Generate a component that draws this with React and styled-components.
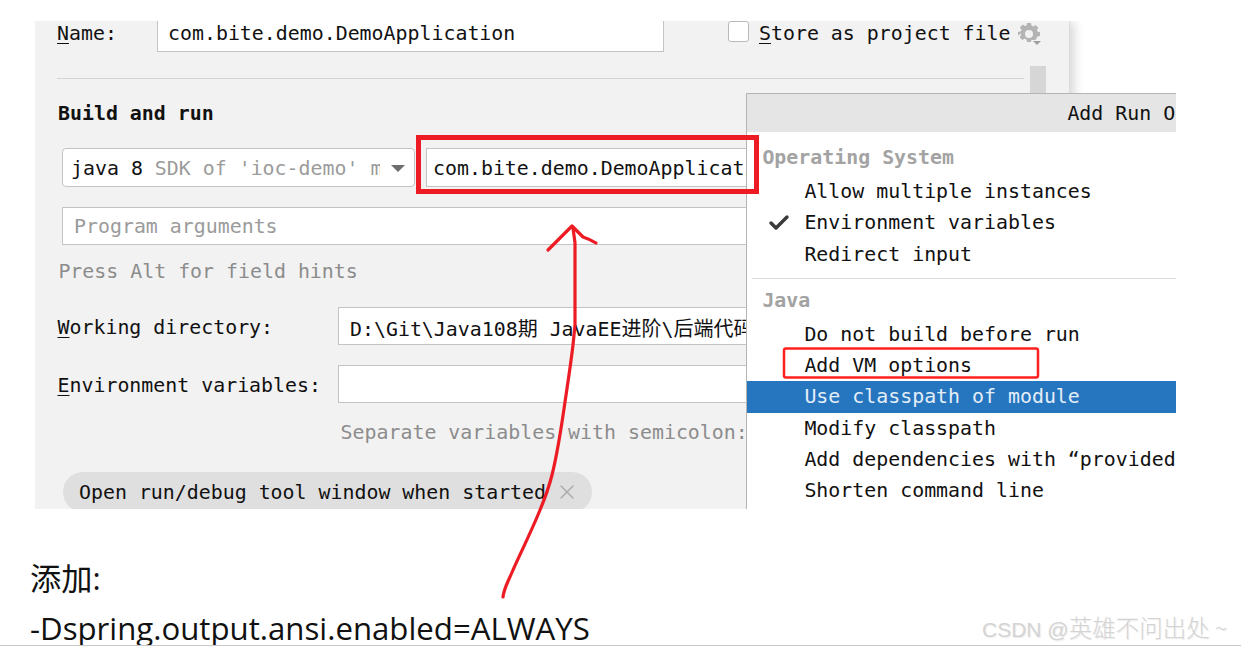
import React from "react";
import styled, { createGlobalStyle } from "styled-components";
import { Check, X } from "lucide-react";

const mono = `"DejaVu Sans Mono", "Noto Sans CJK SC", monospace`;

const Global = createGlobalStyle`
  html, body { margin: 0; padding: 0; background: #fff; }
  #root { width: 1241px; height: 646px; overflow: hidden; }
`;

const Page = styled.div`
  position: relative;
  width: 1241px;
  height: 646px;
  padding-top: 21px;
  box-sizing: border-box;
  background: #fff;
  overflow: hidden;
`;

const Shot = styled.div`
  position: relative;
  width: 1141px;
  height: 488px;
  margin-left: 35px;
  overflow: hidden;
`;

const Dialog = styled.div`
  width: 1035px;
  height: 488px;
  padding: 0 0 0 22px;
  box-sizing: border-box;
  background: #f2f2f2;
  border-right: 1px solid #dcdcdc;
  box-shadow: 4px 0 10px rgba(0, 0, 0, 0.16);
  font-family: ${mono};
  font-size: 19.9px;
  color: #111;
  white-space: nowrap;
`;

const NameRow = styled.div`
  display: flex;
  align-items: flex-start;
  height: 31px;
  line-height: 26px;
`;

const NameLabel = styled.span`
  width: 100px;
`;

const Field = styled.div`
  display: flex;
  align-items: center;
  box-sizing: border-box;
  background: #fff;
  border: 1px solid #c4c4c4;
  width: ${(p) => p.$w}px;
  height: ${(p) => p.$h || 38}px;
  padding-left: ${(p) => p.$pad || 11}px;
  overflow: hidden;
  flex: none;
`;

const NameField = styled(Field)`
  border-top: 0;
  align-items: flex-start;
`;

const StoreBox = styled.span`
  width: 21px;
  height: 21px;
  box-sizing: border-box;
  margin-left: 64px;
  margin-right: 10px;
  background: #fff;
  border: 1px solid #b9b9b9;
  border-radius: 3px;
  flex: none;
`;

const Gear = styled.svg`
  margin: 1px 0 0 7px;
  flex: none;
`;

const Rule = styled.div`
  height: 1px;
  width: 967px;
  margin-top: 26px;
  background: #d3d3d3;
`;

const Heading = styled.div`
  margin: 23px 0 0 1px;
  font-weight: 700;
  line-height: 24px;
`;

const BuildRow = styled.div`
  display: flex;
  margin: 22px 0 0 5px;
  gap: 11px;
`;

const SdkSelect = styled.div`
  display: flex;
  align-items: center;
  box-sizing: border-box;
  width: 353px;
  height: 39px;
  padding: 2px 0 0 8px;
  background: #fff;
  border: 1px solid #c4c4c4;
  border-radius: 4px;
  flex: none;
`;

const SdkText = styled.span`
  width: 309px;
  overflow: hidden;
  flex: none;
`;

const Muted = styled.span`
  color: #9b9b9b;
`;

const Caret = styled.span`
  width: 0;
  height: 0;
  margin-left: 11px;
  border-left: 7px solid transparent;
  border-right: 7px solid transparent;
  border-top: 7px solid #6e6e6e;
`;

const ClassField = styled(Field)`
  height: 39px;
  padding-top: 2px;
`;

const ArgsRow = styled.div`
  margin: 20px 0 0 5px;
`;

const Hint = styled.div`
  margin-top: ${(p) => p.$top}px;
  margin-left: ${(p) => p.$left}px;
  line-height: 24px;
  color: #8c8c8c;
`;

const FormRow = styled.div`
  display: flex;
  align-items: center;
  margin-top: ${(p) => p.$top}px;
`;

const FormLabel = styled.span`
  width: 281px;
  padding: 2px 0 0 0.5px;
  box-sizing: border-box;
  flex: none;
`;

const PathField = styled(Field)`
  padding-top: 2px;
`;

const Path = styled.span`
  white-space: nowrap;
`;

const Cjk = styled.span`
  font-family: "Noto Sans CJK SC", sans-serif;
  font-size: 20px;
`;

const Chip = styled.div`
  display: inline-flex;
  align-items: center;
  box-sizing: border-box;
  width: 529px;
  height: 40px;
  margin: 27px 0 0 6px;
  padding-left: 16px;
  gap: 9px;
  background: #dfdfdf;
  border-radius: 20px;
`;

const CloseIcon = styled(X)`
  color: #acacac;
  flex: none;
`;

const Scrollbar = styled.div`
  position: absolute;
  top: 45px;
  left: 995px;
  width: 16px;
  height: 60px;
  background: #d6d6d6;
`;

const Popup = styled.div`
  position: absolute;
  top: 72px;
  left: 711px;
  width: 430px;
  height: 416px;
  box-sizing: border-box;
  background: #fff;
  border: 1px solid #b4b4b4;
  border-width: 1px 0 0 1px;
  font-family: ${mono};
  font-size: 19.9px;
  color: #111;
  white-space: nowrap;
  overflow: hidden;
`;

const PopupTitle = styled.div`
  height: 38px;
  padding-left: 320.4px;
  line-height: 39px;
  background: #e5e5e5;
`;

const Group = styled.div`
  margin: ${(p) => p.$top}px 0 0 15.4px;
  height: 24px;
  line-height: 24px;
  font-weight: 700;
  color: #a3a3a3;
`;

const Item = styled.div`
  position: relative;
  height: 31.3px;
  line-height: 31px;
  padding-left: 57.4px;
  color: ${(p) => (p.$active ? "#e4eef8" : "#111")};
  background: ${(p) => (p.$active ? "#2675bf" : "transparent")};
`;

const Tick = styled(Check)`
  position: absolute;
  left: 20px;
  top: 4px;
  color: #3a3a3a;
`;

const PopupRule = styled.div`
  height: 1px;
  margin: 8px 0 0 5px;
  background: #dcdcdc;
`;

const ItemList = styled.div`
  margin-top: ${(p) => p.$top}px;
`;

const Note = styled.div`
  font-family: "Open Sans", "Noto Sans CJK SC", sans-serif;
  font-size: 31.2px;
  line-height: 50px;
  margin: ${(p) => p.$top}px 0 0 30px;
  color: #111;
  white-space: nowrap;
`;

const Marks = styled.svg`
  position: absolute;
  inset: 0;
  pointer-events: none;
`;

const Watermark = styled.div`
  position: absolute;
  top: 612px;
  left: 982px;
  font-family: "Liberation Sans", "Noto Sans CJK SC", sans-serif;
  font-size: 21px;
  line-height: 30px;
  color: #d4d4d4;
  text-shadow: 1px 1px 1px rgba(0, 0, 0, 0.08);
  white-space: nowrap;
`;

const WatermarkCjk = styled.span`
  font-family: "Noto Sans CJK SC", sans-serif;
  font-size: 23.5px;
  font-weight: 300;
`;

const BottomLine = styled.div`
  position: absolute;
  left: 0;
  right: 0;
  bottom: 0;
  height: 1px;
  background: #c8c8c8;
`;

const Underlined = styled.span`
  text-decoration: underline;
  text-underline-offset: 3px;
`;

const GearIcon = () => (
  <Gear width="24" height="24" viewBox="0 0 24 24">
    <path
      fill="#b4b4b4"
      fillRule="evenodd"
      d="M9 1h4l.5 2.6 1.8.8 2.3-1.5 2.8 2.8-1.5 2.3.8 1.8L22 10v4l-2.6.5-.8 1.8-1.2 1.7h-4l-.4 2h-4l-.5-2.6-1.8-.8-2.3 1.5-2.8-2.8 1.5-2.3-.8-1.8L0 14v-4l2.6-.5.8-1.8-1.5-2.3 2.8-2.8 2.3 1.5 1.8-.8zM11 8a4 4 0 1 0 0 8 4 4 0 0 0 0-8z"
    />
    <path fill="#a0a0a0" d="M15 19h8l-4 4z" />
  </Gear>
);

const osItems = ["Allow multiple instances", "Environment variables", "Redirect input"];
const javaItems = [
  "Do not build before run",
  "Add VM options",
  "Use classpath of module",
  "Modify classpath",
  "Add dependencies with \u201Cprovided\u201D scope",
  "Shorten command line",
];

export default function App() {
  return (
    <Page>
      <Global />
      <Shot>
        <Dialog>
          <NameRow>
            <NameLabel><Underlined>N</Underlined>ame:</NameLabel>
            <NameField $w={507} $h={31} $pad={10}>com.bite.demo.DemoApplication</NameField>
            <StoreBox />
            <span><Underlined>S</Underlined>tore as project file</span>
            <GearIcon />
          </NameRow>
          <Rule />
          <Heading>Build and run</Heading>
          <BuildRow>
            <SdkSelect>
              <SdkText>java 8 <Muted>SDK of 'ioc-demo' module</Muted></SdkText>
              <Caret />
            </SdkSelect>
            <ClassField $w={330} $pad={6}>com.bite.demo.DemoApplication</ClassField>
          </BuildRow>
          <ArgsRow>
            <Field $w={700}><Muted>Program arguments</Muted></Field>
          </ArgsRow>
          <Hint $top={15} $left={1.4}>Press Alt for field hints</Hint>
          <FormRow $top={23}>
            <FormLabel><Underlined>W</Underlined>orking directory:</FormLabel>
            <PathField $w={420}>
              <Path>D:\Git\Java108<Cjk>期</Cjk> JavaEE<Cjk>进阶</Cjk>\<Cjk>后端代码</Cjk></Path>
            </PathField>
          </FormRow>
          <FormRow $top={20}>
            <FormLabel><Underlined>E</Underlined>nvironment variables:</FormLabel>
            <Field $w={420} />
          </FormRow>
          <Hint $top={18} $left={283.6}>Separate variables with semicolon:</Hint>
          <Chip>
            Open run/debug tool window when started
            <CloseIcon size={24} strokeWidth={1.5} />
          </Chip>
        </Dialog>
        <Scrollbar />
        <Popup>
          <PopupTitle>Add Run Options</PopupTitle>
          <Group $top={14}>Operating System</Group>
          <ItemList $top={6}>
            {osItems.map((label, i) => (
              <Item key={label}>
                {i === 1 && <Tick size={24} strokeWidth={3.4} />}
                {label}
              </Item>
            ))}
          </ItemList>
          <PopupRule />
          <Group $top={10}>Java</Group>
          <ItemList $top={6}>
            {javaItems.map((label) => (
              <Item key={label} $active={label === "Use classpath of module"}>{label}</Item>
            ))}
          </ItemList>
        </Popup>
      </Shot>
      <Note $top={44}>添加:</Note>
      <Note $top={0}>-Dspring.output.ansi.enabled=ALWAYS</Note>
      <Marks width="1241" height="646" viewBox="0 0 1241 646">
        <rect x="418.5" y="137.5" width="338" height="54" fill="none" stroke="#ed1c24" strokeWidth="5" />
        <rect x="784" y="348.5" width="254" height="29" rx="2" fill="none" stroke="#ff1f1f" strokeWidth="2.5" />
        <path
          d="M503 597 C504 588 508 582 513 570 C521 552 532 530 540 510 C545 498 549 487 552 475 C557 455 561 430 565 402 C568 382 571 362 573 345 L575 325 C575 310 575 295 575 290 L575 243 L573 228"
          fill="none"
          stroke="#ed1c24"
          strokeWidth="3.2"
          strokeLinecap="round"
          strokeLinejoin="round"
        />
        <path
          d="M548 250 L561 237 L572 226 L583 237 C589 239 593 241 596 243"
          fill="none"
          stroke="#ed1c24"
          strokeWidth="3.2"
          strokeLinecap="round"
          strokeLinejoin="round"
        />
      </Marks>
      <Watermark>CSDN @<WatermarkCjk>英雄不问出处 ~</WatermarkCjk></Watermark>
      <BottomLine />
    </Page>
  );
}
